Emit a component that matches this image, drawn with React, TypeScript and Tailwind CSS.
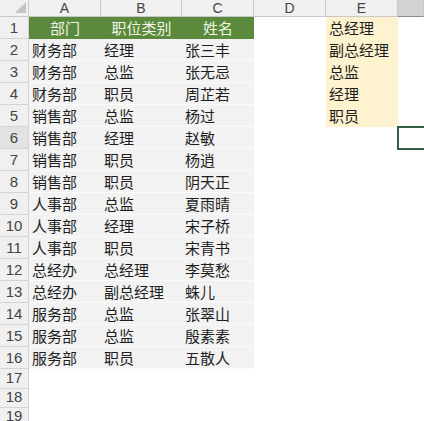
import React from "react";

const data: [string, string, string][] = [
  ["财务部", "经理", "张三丰"],
  ["财务部", "总监", "张无忌"],
  ["财务部", "职员", "周芷若"],
  ["销售部", "总监", "杨过"],
  ["销售部", "经理", "赵敏"],
  ["销售部", "职员", "杨逍"],
  ["销售部", "职员", "阴天正"],
  ["人事部", "总监", "夏雨晴"],
  ["人事部", "经理", "宋子桥"],
  ["人事部", "职员", "宋青书"],
  ["总经办", "总经理", "李莫愁"],
  ["总经办", "副总经理", "蛛儿"],
  ["服务部", "总监", "张翠山"],
  ["服务部", "总监", "殷素素"],
  ["服务部", "职员", "五散人"],
];

const eList = ["总经理", "副总经理", "总监", "经理", "职员"];
const cols = ["A", "B", "C", "D", "E", ""];

const font = { fontFamily: '"Noto Sans CJK SC", "Noto Sans", sans-serif' };
const latin = { fontFamily: '"Liberation Sans", "Noto Sans", sans-serif' };

function RowHead({ n, h, sel }: { n: number; h: string; sel?: boolean }) {
  return (
    <div
      className={`${h} flex items-end justify-center border-b border-r border-[#d4d4d4] ${
        sel ? "bg-[#e2e2e2]" : "bg-[#f0f0f0]"
      } text-[15px] leading-[18px] text-[#444]`}
      style={latin}
    >
      <span className="pb-[1px]">{n}</span>
    </div>
  );
}

export default function App() {
  const rows: React.ReactNode[] = [];

  rows.push(
    <React.Fragment key="r1">
      <RowHead n={1} h="h-[22px]" />
      <div className="h-[22px] bg-[#5b8a3c] text-[#eef5e6] flex items-center justify-center">部门</div>
      <div className="h-[22px] bg-[#5b8a3c] text-[#eef5e6] flex items-center justify-center">职位类别</div>
      <div className="h-[22px] bg-[#5b8a3c] text-[#eef5e6] flex items-center justify-center">姓名</div>
      <div className="h-[22px] bg-white" />
      <div className="h-[22px] bg-[#fff2cf] flex items-center pl-[3px]">{eList[0]}</div>
      <div className="h-[22px] bg-white" />
    </React.Fragment>
  );

  data.forEach((r, i) => {
    const n = i + 2;
    const eText = i < 4 ? eList[i + 1] : null;
    rows.push(
      <React.Fragment key={n}>
        <RowHead n={n} h="h-[22px]" sel={n === 6} />
        <div className="h-[22px] bg-[#f2f2f2] border-b border-[#fafafa] flex items-center pl-[3px]">{r[0]}</div>
        <div className="h-[22px] bg-[#f2f2f2] border-b border-[#fafafa] flex items-center pl-[3px]">{r[1]}</div>
        <div className="h-[22px] bg-[#f2f2f2] border-b border-[#fafafa] flex items-center pl-[3px]">{r[2]}</div>
        <div className="h-[22px] bg-white" />
        {eText ? (
          <div className="h-[22px] bg-[#fff2cf] flex items-center pl-[3px]">{eText}</div>
        ) : (
          <div className="h-[22px] bg-white" />
        )}
        {n === 6 ? (
          <div className="h-[22px] bg-white relative">
            <div className="absolute left-[-1px] top-[-1px] right-[-4px] bottom-[-1px] border-2 border-[#2f6046]" />
          </div>
        ) : (
          <div className="h-[22px] bg-white" />
        )}
      </React.Fragment>
    );
  });

  [17, 18, 19].forEach((n) => {
    const h = n === 17 ? "h-[20px]" : "h-[19px]";
    rows.push(
      <React.Fragment key={n}>
        <RowHead n={n} h={h} />
        <div className={`${h} bg-white`} />
        <div className={`${h} bg-white`} />
        <div className={`${h} bg-white`} />
        <div className={`${h} bg-white`} />
        <div className={`${h} bg-white`} />
        <div className={`${h} bg-white`} />
      </React.Fragment>
    );
  });

  return (
    <div className="w-[424px] h-[421px] overflow-hidden bg-white text-[15px] text-[#1e1e1e]" style={font}>
      <div className="grid grid-cols-[29px_72px_81px_72px_72px_72px_1fr] leading-[20px]">
        <div className="h-[17px] bg-[#f0f0f0] border-b border-r border-[#c8c8c8] relative">
          <svg className="absolute right-[2px] bottom-[3px]" width="11" height="11" viewBox="0 0 11 11">
            <polygon points="11,0 11,11 0,11" fill="#c3c3c3" />
          </svg>
        </div>
        {cols.map((c, i) => (
          <div
            key={i}
            className={`h-[17px] flex items-center justify-center border-b border-r text-[14px] leading-[16px] ${
              c === ""
                ? "bg-[#d3d3d3] border-b-[#8a8a8a] border-r-[#c8c8c8] text-[#222]"
                : "bg-[#f0f0f0] border-[#c8c8c8] text-[#444]"
            }`}
            style={latin}
          >
            {c}
          </div>
        ))}
        {rows}
      </div>
    </div>
  );
}
